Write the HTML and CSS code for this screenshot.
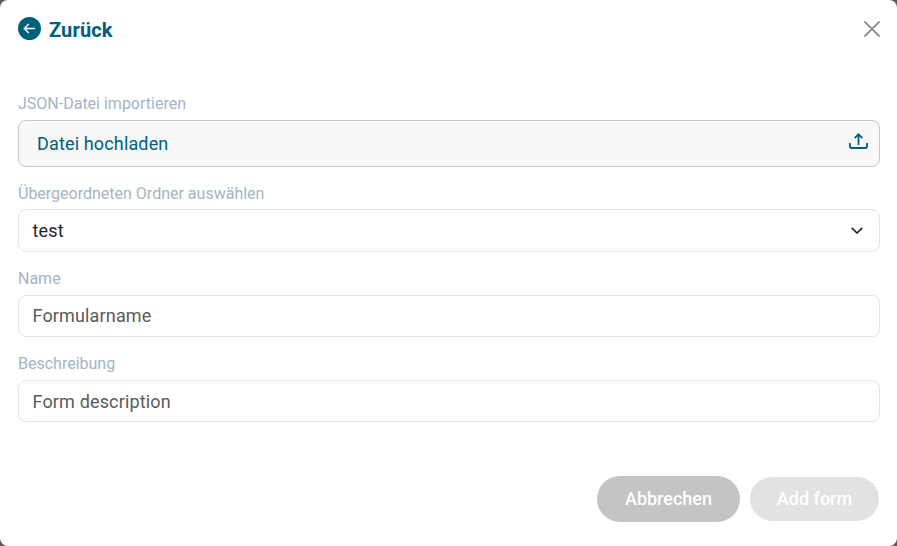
FILE: index.html
```html
<!DOCTYPE html>
<html lang="de">
<head>
    <meta charset="UTF-8">
    <meta name="viewport" content="width=device-width, initial-scale=1.0">
    <title>Formular importieren</title>
    <link rel="stylesheet" href="styles.css">
</head>
<body>
    <div class="dialog">
        <header class="dialog-head">
            <a class="back-link" href="#">
                <svg class="back-icon" width="23" height="23" viewBox="0 0 23 23">
                    <circle cx="11.5" cy="11.5" r="11.5" fill="#00607a"/>
                    <path d="M17 11.5H6.5M10.8 7 6.3 11.5l4.5 4.5" fill="none" stroke="#fff" stroke-width="1.4"/>
                </svg>
                <span class="back-text">Zurück</span>
            </a>
            <button class="close-btn" aria-label="Schließen">
                <svg width="18" height="18" viewBox="0 0 18 18">
                    <path d="M1.5 1.5l15 15M16.5 1.5l-15 15" fill="none" stroke="#7d7d7d" stroke-width="1.7"/>
                </svg>
            </button>
        </header>

        <form class="form">
            <div class="field">
                <label class="field-label">JSON-Datei importieren</label>
                <div class="upload-box">
                    <span>Datei hochladen</span>
                    <svg class="upload-icon" width="19" height="16" viewBox="0 0 19 16">
                        <path d="M9.5 12V1.5M5.6 5.2 9.5 1.3l3.9 3.9M.9 10v3a2 2 0 0 0 2 2h13.2a2 2 0 0 0 2-2v-3" fill="none" stroke="#00607a" stroke-width="1.8"/>
                    </svg>
                </div>
            </div>
            <div class="field">
                <label class="field-label">Übergeordneten Ordner auswählen</label>
                <div class="text-box select-box">
                    <span>test</span>
                    <svg width="12" height="7" viewBox="0 0 12 7">
                        <path d="M.8.8 6 6l5.2-5.2" fill="none" stroke="#23272b" stroke-width="1.7"/>
                    </svg>
                </div>
            </div>
            <div class="field">
                <label class="field-label">Name</label>
                <div class="text-box name-box">Formularname</div>
            </div>
            <div class="field">
                <label class="field-label">Beschreibung</label>
                <div class="text-box">Form description</div>
            </div>
        </form>

        <footer class="dialog-foot">
            <button class="btn btn-cancel" type="button">Abbrechen</button>
            <button class="btn btn-submit" type="button" disabled>Add form</button>
        </footer>
    </div>
</body>
</html>
```

FILE: styles.css
```css
html, body {
    height: 100%;
}
body {
    font-family: Roboto, 'Liberation Sans', sans-serif;
    background-color: #5a5a5a;
    margin: 0;
    overflow: hidden;
}
.dialog {
    box-sizing: border-box;
    height: 546px;
    padding: 17px 18px 0 18px;
    background: #fff;
    border-radius: 8px;
    display: flex;
    flex-direction: column;
}
.dialog-head {
    display: flex;
    justify-content: space-between;
    align-items: center;
    height: 23px;
}
.back-link {
    display: flex;
    align-items: center;
    gap: 8px;
    color: #00607a;
    font-size: 20px;
    font-weight: 700;
    letter-spacing: 0.15px;
    text-decoration: none;
}
.back-text {
    padding-top: 2px;
}
.close-btn {
    padding: 0;
    margin-right: -2px;
    border: none;
    background: none;
    line-height: 0;
}
.form {
    margin-top: 54px;
    margin-right: -1px;
    display: flex;
    flex-direction: column;
    gap: 17px;
}
.field-label {
    display: block;
    height: 26px;
    line-height: 20px;
    color: #a3b5c6;
    font-size: 16px;
}
.upload-box {
    box-sizing: border-box;
    height: 47px;
    padding: 0 11px 0 18px;
    display: flex;
    justify-content: space-between;
    align-items: center;
    background: #f9f8f6;
    border: 1px solid #c6c6c6;
    border-radius: 8px;
    color: #00607a;
    font-size: 18px;
    letter-spacing: 0.15px;
}
.upload-icon {
    margin-bottom: 5px;
}
.text-box {
    box-sizing: border-box;
    height: 42px;
    padding: 0 16px 0 13.5px;
    display: flex;
    align-items: center;
    border: 1px solid #e2e4e6;
    border-radius: 8px;
    color: #5a5a5a;
    font-size: 18px;
    letter-spacing: 0.15px;
}
.select-box {
    height: 43px;
    margin-top: -1px;
    justify-content: space-between;
    color: #23272b;
}
.name-box {
    padding-bottom: 2px;
}
.dialog-foot {
    margin-top: 54px;
    display: flex;
    justify-content: flex-end;
    align-items: center;
    gap: 10px;
}
.btn {
    padding: 0 0 2px;
    border: none;
    border-radius: 23px;
    color: #fff;
    font-family: inherit;
    font-size: 18px;
    font-weight: 500;
}
.btn-cancel {
    width: 143px;
    height: 46px;
    background: #c4c4c4;
}
.btn-submit {
    width: 129px;
    height: 44px;
    background: #e2e2e2;
}
```
